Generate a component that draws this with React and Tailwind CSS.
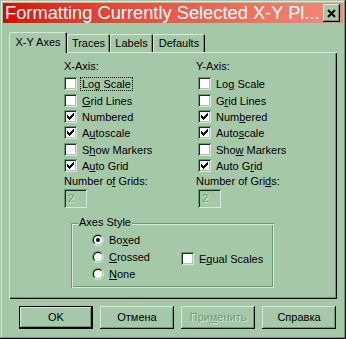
import React from "react";

const CHECK = ["......x", ".....xx", "x...xxx", "xx.xxx.", "xxxxx..", ".xxx...", "..x...."];

function U({ children }) {
  return <span className="underline decoration-1 underline-offset-[1px]">{children}</span>;
}

function Check({ checked }) {
  const cells = [];
  CHECK.forEach((row, y) =>
    row.split("").forEach((c, x) => {
      if (c === "x") cells.push(<rect key={x + "-" + y} x={x + 3} y={y + 3} width="1" height="1" fill="#000" />);
    })
  );
  return (
    <span className="relative block w-[13px] h-[13px] shrink-0 bg-white shadow-[inset_1px_1px_#669C70,inset_-1px_-1px_#D8E8DA,inset_2px_2px_#1a2e1c,inset_-2px_-2px_#A5C8A8]">
      {checked && (
        <svg className="absolute left-0 top-0" width="13" height="13" shapeRendering="crispEdges">
          {cells}
        </svg>
      )}
    </span>
  );
}

function Radio({ on }) {
  return (
    <span className="block w-[12px] h-[12px] shrink-0 rounded-full border border-t-[#669C70] border-l-[#669C70] border-r-[#D8E8DA] border-b-[#D8E8DA]">
      <span className="flex items-center justify-center w-full h-full rounded-full bg-white border border-t-[#000] border-l-[#000] border-r-[#A5C8A8] border-b-[#A5C8A8]">
        {on && <span className="block w-[4px] h-[4px] rounded-full bg-black" />}
      </span>
    </span>
  );
}

function CheckRow({ checked, focus, mt, children }) {
  return (
    <div className={"flex items-center h-[13px] " + mt}>
      <Check checked={checked} />
      <span
        className={
          "ml-[3px] pl-[1px] pr-[1px] leading-[12px] border " +
          (focus ? "border-dotted border-black" : "border-transparent")
        }
      >
        {children}
      </span>
    </div>
  );
}

function TextBox() {
  return (
    <div className="mt-[1px] w-[23px] h-[19px] pl-[4px] pt-[2px] leading-[14px] text-[#669C70] [text-shadow:1px_1px_0_#D8E8DA] shadow-[inset_1px_1px_#669C70,inset_-1px_-1px_#D8E8DA,inset_2px_2px_#1a2e1c,inset_-2px_-2px_#A5C8A8]">
      2
    </div>
  );
}

const MTS = ["mt-[4px]", "mt-[4px]", "mt-[3px]", "mt-[3px]", "mt-[4px]", "mt-[3px]"];

function Column({ title, labelShift, rows, grids }) {
  return (
    <div className="flex flex-col">
      <div className={"h-[13px] leading-[13px] " + labelShift}>{title}</div>
      {rows.map((r, i) => (
        <CheckRow key={i} checked={r.c} focus={r.f} mt={MTS[i]}>
          {r.t}
        </CheckRow>
      ))}
      <div className={"mt-[3px] h-[13px] leading-[13px] " + labelShift}>{grids}</div>
      <TextBox />
    </div>
  );
}

function Button({ children, def, disabled }) {
  return (
    <div
      className={
        "w-[74px] h-[23px] flex items-center justify-center " +
        (def
          ? "shadow-[inset_0_0_0_1px_#000,inset_-2px_-2px_#000,inset_2px_2px_#D8E8DA,inset_-3px_-3px_#669C70]"
          : "shadow-[inset_-1px_-1px_#000,inset_1px_1px_#D8E8DA,inset_-2px_-2px_#669C70]") +
        (disabled ? " text-[#669C70] [text-shadow:1px_1px_0_#D8E8DA]" : "")
      }
    >
      {children}
    </div>
  );
}

export default function App() {
  return (
    <div className="w-[346px] h-[339px] bg-[#A5C8A8] p-[3px] flex flex-col text-[11px] text-black font-['Liberation_Sans',Arial,sans-serif] shadow-[inset_-1px_-1px_#000,inset_1px_1px_#A5C8A8,inset_-2px_-2px_#669C70,inset_2px_2px_#D8E8DA]">
      {/* title bar */}
      <div className="h-[20px] flex items-center justify-between bg-linear-to-r from-[#DE0000] to-[#F28A7A]">
        <span className="ml-[2px] text-white text-[18.3px] leading-[20px] whitespace-nowrap">
          Formatting Currently Selected X-Y Pl...
        </span>
        <div className="mr-[3px] w-[17px] h-[18px] flex items-center justify-center bg-[#A5C8A8] shadow-[inset_-1px_-1px_#000,inset_1px_1px_#D8E8DA,inset_-2px_-2px_#669C70]">
          <svg width="9" height="9" viewBox="0 0 9 9">
            <path d="M1 1 L8 8 M8 1 L1 8" stroke="#000" strokeWidth="2" />
          </svg>
        </div>
      </div>

      {/* tabs */}
      <div className="mt-[9px] ml-[6px] h-[20px] flex items-end relative z-10">
        <div className="w-[58px] h-[21px] -mb-[1px] bg-[#A5C8A8] rounded-t-[2px] flex items-center justify-center pb-[1px] shadow-[inset_1px_1px_#D8E8DA,inset_-1px_0_#000,inset_-2px_0_#669C70]">
          X-Y Axes
        </div>
        <div className="w-[43px] h-[18px] rounded-t-[2px] flex items-center justify-center shadow-[inset_1px_1px_#D8E8DA,inset_-1px_0_#000,inset_-2px_0_#669C70]">
          Traces
        </div>
        <div className="w-[43px] h-[18px] rounded-t-[2px] flex items-center justify-center shadow-[inset_1px_1px_#D8E8DA,inset_-1px_0_#000,inset_-2px_0_#669C70]">
          Labels
        </div>
        <div className="w-[52px] h-[18px] rounded-t-[2px] flex items-center justify-center shadow-[inset_1px_1px_#D8E8DA,inset_-1px_0_#000,inset_-2px_0_#669C70]">
          Defaults
        </div>
      </div>

      {/* panel */}
      <div className="ml-[6px] w-[328px] h-[247px] flex flex-col pt-[8px] shadow-[inset_1px_1px_#D8E8DA,inset_-1px_-1px_#000,inset_-2px_-2px_#669C70]">
        <div className="flex">
          <div className="ml-[55px] w-[134px]">
            <Column
              title="X-Axis:"
              labelShift=""
              grids={
                <>
                  Number o<U>f</U> Grids:
                </>
              }
              rows={[
                { c: false, f: true, t: "Log Scale" },
                { c: false, t: <><U>G</U>rid Lines</> },
                { c: true, t: "Numbered" },
                { c: true, t: <>A<U>u</U>toscale</> },
                { c: false, t: <>S<U>h</U>ow Markers</> },
                { c: true, t: <>A<U>u</U>to Grid</> },
              ]}
            />
          </div>
          <div>
            <Column
              title="Y-Axis:"
              labelShift="-ml-[2px]"
              grids={
                <>
                  Number of Gri<U>d</U>s:
                </>
              }
              rows={[
                { c: false, t: <>Lo<U>g</U> Scale</> },
                { c: false, t: <>G<U>r</U>id Lines</> },
                { c: true, t: <>Num<U>b</U>ered</> },
                { c: true, t: <>Auto<U>s</U>cale</> },
                { c: false, t: <>Sho<U>w</U> Markers</> },
                { c: true, t: <>Auto G<U>r</U>id</> },
              ]}
            />
          </div>
        </div>

        {/* group box */}
        <div className="relative ml-[62px] mt-[15px] w-[203px] h-[65px] flex shadow-[inset_1px_1px_#669C70,inset_-1px_-1px_#D8E8DA,inset_2px_2px_#D8E8DA,inset_-2px_-2px_#669C70]">
          <span className="absolute left-[7px] -top-[7px] px-[1px] bg-[#A5C8A8] leading-[13px]">Axes Style</span>
          <div className="ml-[21px] w-[89px] pt-[11px] flex flex-col gap-[5px]">
            <div className="flex items-center h-[12px]">
              <Radio on />
              <span className="ml-[5px] leading-[12px]">
                Bo<U>x</U>ed
              </span>
            </div>
            <div className="flex items-center h-[12px]">
              <Radio />
              <span className="ml-[5px] leading-[12px]">
                <U>C</U>rossed
              </span>
            </div>
            <div className="flex items-center h-[12px]">
              <Radio />
              <span className="ml-[5px] leading-[12px]">
                <U>N</U>one
              </span>
            </div>
          </div>
          <div className="pt-[29px]">
            <div className="flex items-center h-[13px]">
              <Check />
              <span className="ml-[5px] leading-[12px]">
                E<U>q</U>ual Scales
              </span>
            </div>
          </div>
        </div>
      </div>

      {/* buttons */}
      <div className="mt-[7px] ml-[16px] flex gap-[7px]">
        <Button def>OK</Button>
        <Button>Отмена</Button>
        <Button disabled>
          При<U>м</U>енить
        </Button>
        <Button>Справка</Button>
      </div>
    </div>
  );
}
